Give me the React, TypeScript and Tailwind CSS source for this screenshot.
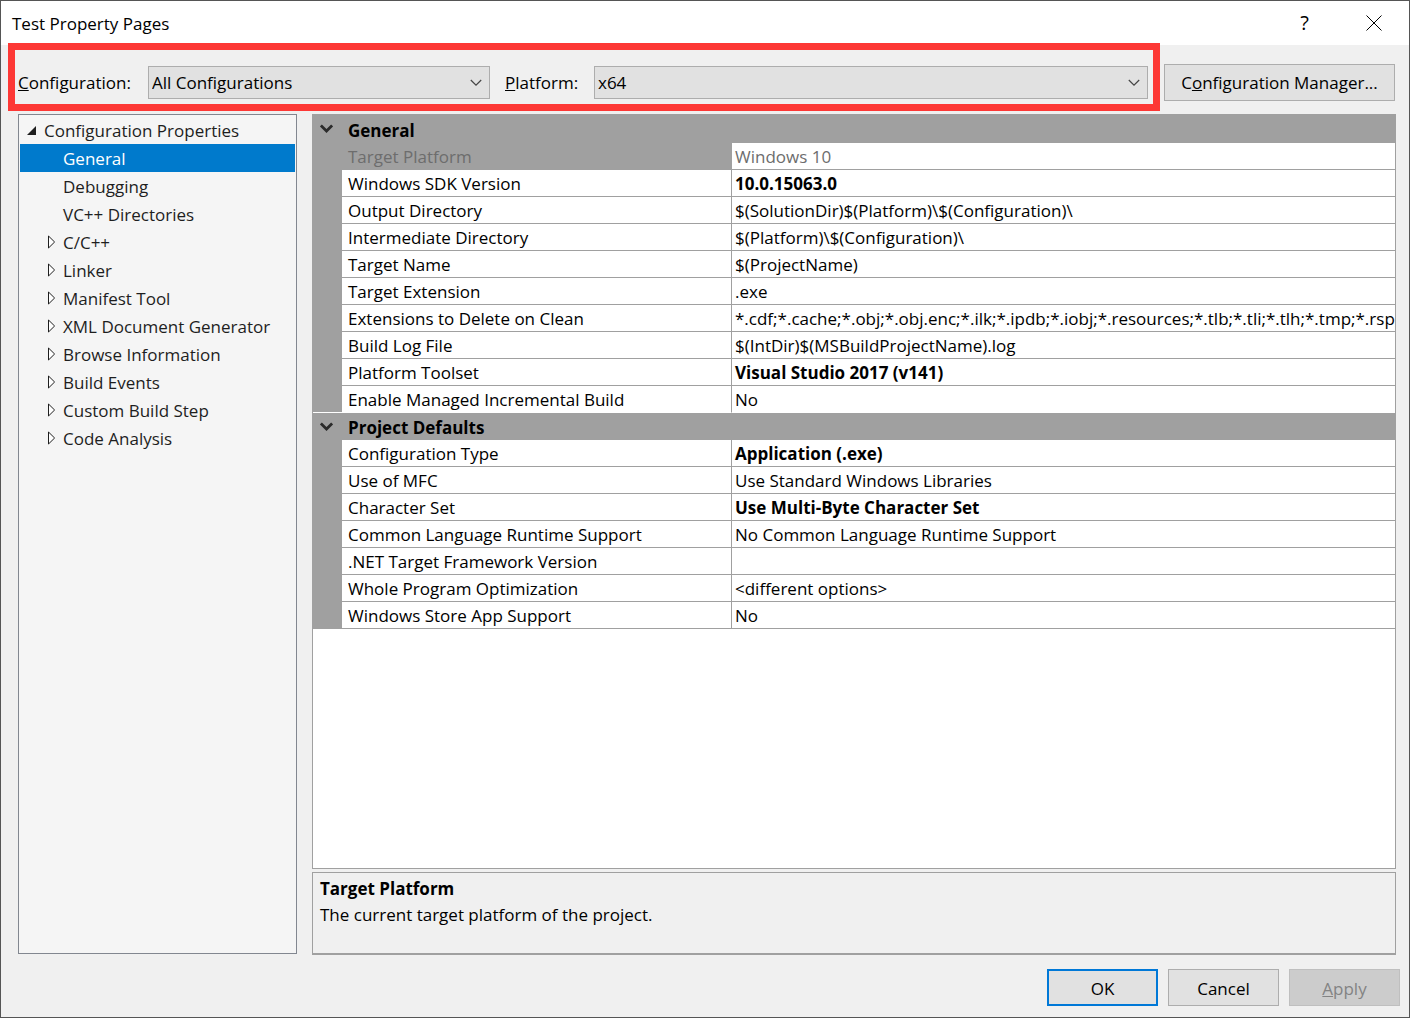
import { useState } from 'react'
import type { ReactNode } from 'react'

type Property = {
  name: string
  value: string
  bold?: boolean
  disabled?: boolean
}

type Group = {
  title: string
  rows: Property[]
}

const treeItems = [
  { label: 'General', expandable: false },
  { label: 'Debugging', expandable: false },
  { label: 'VC++ Directories', expandable: false },
  { label: 'C/C++', expandable: true },
  { label: 'Linker', expandable: true },
  { label: 'Manifest Tool', expandable: true },
  { label: 'XML Document Generator', expandable: true },
  { label: 'Browse Information', expandable: true },
  { label: 'Build Events', expandable: true },
  { label: 'Custom Build Step', expandable: true },
  { label: 'Code Analysis', expandable: true },
]

const groups: Group[] = [
  {
    title: 'General',
    rows: [
      { name: 'Target Platform', value: 'Windows 10', disabled: true },
      { name: 'Windows SDK Version', value: '10.0.15063.0', bold: true },
      { name: 'Output Directory', value: '$(SolutionDir)$(Platform)\\$(Configuration)\\' },
      { name: 'Intermediate Directory', value: '$(Platform)\\$(Configuration)\\' },
      { name: 'Target Name', value: '$(ProjectName)' },
      { name: 'Target Extension', value: '.exe' },
      {
        name: 'Extensions to Delete on Clean',
        value: '*.cdf;*.cache;*.obj;*.obj.enc;*.ilk;*.ipdb;*.iobj;*.resources;*.tlb;*.tli;*.tlh;*.tmp;*.rsp;*.pgc',
      },
      { name: 'Build Log File', value: '$(IntDir)$(MSBuildProjectName).log' },
      { name: 'Platform Toolset', value: 'Visual Studio 2017 (v141)', bold: true },
      { name: 'Enable Managed Incremental Build', value: 'No' },
    ],
  },
  {
    title: 'Project Defaults',
    rows: [
      { name: 'Configuration Type', value: 'Application (.exe)', bold: true },
      { name: 'Use of MFC', value: 'Use Standard Windows Libraries' },
      { name: 'Character Set', value: 'Use Multi-Byte Character Set', bold: true },
      { name: 'Common Language Runtime Support', value: 'No Common Language Runtime Support' },
      { name: '.NET Target Framework Version', value: '' },
      { name: 'Whole Program Optimization', value: '<different options>' },
      { name: 'Windows Store App Support', value: 'No' },
    ],
  },
]

function Combo({ id, options }: { id: string; options: string[] }) {
  return (
    <div className="relative flex-1">
      <select
        id={id}
        className="block h-[33px] w-full appearance-none border border-[#adadad] bg-[#e1e1e1] pl-[3px] pr-8 pt-[2px] text-black"
      >
        {options.map((o) => (
          <option key={o}>{o}</option>
        ))}
      </select>
      <svg
        className="pointer-events-none absolute right-2 top-[13px]"
        width="12"
        height="8"
        viewBox="0 0 12 8"
        fill="none"
        stroke="#444"
        strokeWidth="1.2"
      >
        <path d="M0.8 1 6 6.2 11.2 1" />
      </svg>
    </div>
  )
}

function DialogButton({
  children,
  className,
  disabled,
}: {
  children: ReactNode
  className: string
  disabled?: boolean
}) {
  return (
    <button type="button" disabled={disabled} className={`h-[37px] w-[111px] pt-[2px] ${className}`}>
      {children}
    </button>
  )
}

function TreeView() {
  const [selected, setSelected] = useState('General')

  return (
    <nav className="mb-px w-[279px] shrink-0 border border-[#828790] bg-[#f5f5f5] p-px text-[#1e1e1e]">
      <button type="button" className="flex h-7 w-full items-center pl-[7px] text-left">
        <svg className="mr-2" width="9" height="9" viewBox="0 0 9 9">
          <path d="M9 0V9H0Z" fill="#1e1e1e" />
        </svg>
        <span className="pt-[2px]">Configuration Properties</span>
      </button>
      <ul>
        {treeItems.map((item) => (
          <li key={item.label}>
            <button
              type="button"
              onClick={() => setSelected(item.label)}
              className={`flex h-7 w-full items-center text-left ${
                selected === item.label ? 'bg-[#007acc] text-white' : ''
              }`}
            >
              <span className="flex w-[43px] shrink-0 pl-[27px]">
                {item.expandable && (
                  <svg width="9" height="14" viewBox="0 0 9 14" fill="#fff" stroke="#1e1e1e">
                    <path d="M1.5 1V13L7.6 7Z" />
                  </svg>
                )}
              </span>
              <span className="pt-[2px]">{item.label}</span>
            </button>
          </li>
        ))}
      </ul>
    </nav>
  )
}

function PropertyGroup({ group, first }: { group: Group; first: boolean }) {
  return (
    <tbody>
      <tr className={`bg-[#a0a0a0] ${first ? 'h-7' : 'h-[27px]'}`}>
        <td className="p-0">
          <button type="button" aria-label={`Collapse ${group.title}`} className="block pl-[7px]">
            <svg width="13" height="10" viewBox="0 0 13 10" fill="none" stroke="#2b2b2b" strokeWidth="2.8">
              <path d="M0.9 1.4 6.5 7 12.1 1.4" />
            </svg>
          </button>
        </td>
        <th colSpan={2} className="p-0 pl-[6px] pt-[3px] text-left font-bold">
          {group.title}
        </th>
      </tr>
      {group.rows.map((row, i) => {
        // a white rule separates the first group from the next header
        const line = first && i === group.rows.length - 1 ? 'border-b-white' : 'border-b-[#a0a0a0]'
        return (
          <tr key={row.name} className="h-[27px]">
            <td className={`border-b bg-[#a0a0a0] p-0 ${line}`} />
            <td
              className={`border-b border-r border-r-[#a0a0a0] p-0 pl-[6px] pt-[2px] ${line} ${
                row.disabled ? 'bg-[#a0a0a0] text-[#6d6d6d]' : ''
              }`}
            >
              {row.name}
            </td>
            <td
              className={`overflow-hidden border-b p-0 pl-[3px] pt-[2px] ${line} ${row.bold ? 'font-bold' : ''} ${
                row.disabled ? 'text-[#6d6d6d]' : ''
              }`}
            >
              {row.value}
            </td>
          </tr>
        )
      })}
    </tbody>
  )
}

export default function App() {
  return (
    <div className="flex min-h-screen flex-col border border-[#555] bg-[#f0f0f0] font-['Open_Sans','Noto_Sans',sans-serif] text-[17px] leading-6 text-black">
      {/* Title bar */}
      <header className="flex h-11 items-center bg-white pl-[11px] pr-[27px]">
        <h1 className="flex-1 pt-[2px]">Test Property Pages</h1>
        <button type="button" aria-label="Help" className="mr-[57px] text-[20px]">
          ?
        </button>
        <button type="button" aria-label="Close">
          <svg width="16" height="16" viewBox="0 0 16 16" stroke="#000" strokeWidth="1">
            <path d="M0.5 0.5 15.5 15.5M15.5 0.5 0.5 15.5" />
          </svg>
        </button>
      </header>

      {/* Configuration / platform pickers */}
      <div className="flex items-center pl-[7px] pr-[14px]">
        <div className="relative z-10 -mt-[2px] flex h-[68px] flex-1 items-center border-[7px] border-[#fd3835] pl-[3px] pr-[5px] pt-[10px]">
          <div className="flex w-[472px] items-center">
            <label htmlFor="configuration" className="w-[130px] pt-[2px]">
              <u>C</u>onfiguration:
            </label>
            <Combo id="configuration" options={['All Configurations', 'Debug', 'Release']} />
          </div>
          <div className="ml-[15px] flex flex-1 items-center">
            <label htmlFor="platform" className="w-[89px] pt-[2px]">
              <u>P</u>latform:
            </label>
            <Combo id="platform" options={['x64', 'Win32', 'All Platforms']} />
          </div>
        </div>
        <button type="button" className="ml-1 mt-2 h-[37px] w-[231px] border border-[#adadad] bg-[#e1e1e1] pt-[2px]">
          C<u>o</u>nfiguration Manager...
        </button>
      </div>

      <main className="mt-[3px] flex flex-1 gap-[15px] pl-[17px] pr-[13px]">
        <TreeView />
        <div className="flex min-w-0 flex-1 flex-col gap-[3px]">
          <div className="flex-1 border border-[#a0a0a0] bg-white">
            <table className="w-full table-fixed border-separate border-spacing-0 whitespace-nowrap">
              <colgroup>
                <col className="w-[29px]" />
                <col className="w-[390px]" />
                <col />
              </colgroup>
              {groups.map((g, i) => (
                <PropertyGroup key={g.title} group={g} first={i === 0} />
              ))}
            </table>
          </div>
          <section className="h-[83px] border border-b-2 border-[#a0a0a0] px-[7px] pt-1">
            <h2 className="font-bold">Target Platform</h2>
            <p className="mt-[2px]">The current target platform of the project.</p>
          </section>
        </div>
      </main>

      <footer className="flex justify-end gap-[10px] px-[9px] pb-[11px] pt-[14px]">
        <DialogButton className="border-2 border-[#0078d7] bg-[#e1e1e1]">OK</DialogButton>
        <DialogButton className="border border-[#adadad] bg-[#e1e1e1]">Cancel</DialogButton>
        <DialogButton disabled className="border border-[#bfbfbf] bg-[#cccccc] text-[#838383]">
          <u>A</u>pply
        </DialogButton>
      </footer>
    </div>
  )
}
